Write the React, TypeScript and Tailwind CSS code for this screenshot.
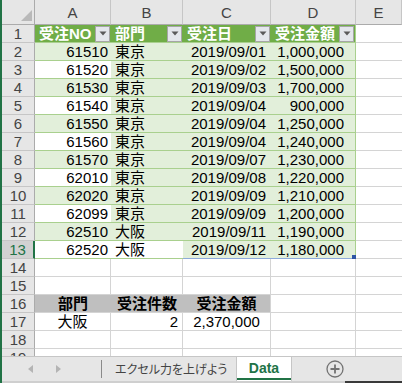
import React from "react";

const data: [string, string, string, string][] = [
  ["61510", "東京", "2019/09/01", "1,000,000"],
  ["61520", "東京", "2019/09/02", "1,500,000"],
  ["61530", "東京", "2019/09/03", "1,700,000"],
  ["61540", "東京", "2019/09/04", "900,000"],
  ["61550", "東京", "2019/09/04", "1,250,000"],
  ["61560", "東京", "2019/09/04", "1,240,000"],
  ["61570", "東京", "2019/09/07", "1,230,000"],
  ["62010", "東京", "2019/09/08", "1,220,000"],
  ["62020", "東京", "2019/09/09", "1,210,000"],
  ["62099", "東京", "2019/09/09", "1,200,000"],
  ["62510", "大阪", "2019/09/11", "1,190,000"],
  ["62520", "大阪", "2019/09/12", "1,180,000"],
];

function RowHead({ n, selected }: { n: number; selected?: boolean }) {
  return (
    <div
      className={
        "h-[18px] flex items-center justify-center border-b border-b-[#c6c6c6] " +
        (selected
          ? "bg-[#d2d2d2] text-[#217346] border-r-2 border-r-[#217346]"
          : "bg-[#e6e6e6] text-[#444444] border-r border-r-[#ababab]")
      }
    >
      {n}
    </div>
  );
}

function FilterBtn() {
  return (
    <div className="w-[15px] h-[16px] mr-[1px] shrink-0 bg-[#e4e7ec] border border-[#a6a6a6] flex items-center justify-center">
      <svg width="8" height="5" viewBox="0 0 8 5">
        <path d="M0.5 0.5 L7.5 0.5 L4 4.5 Z" fill="#5a5a5a" />
      </svg>
    </div>
  );
}

function HeadCell({ text, border }: { text: string; border?: boolean }) {
  return (
    <div
      className={
        "h-[18px] flex items-center justify-between bg-[#70ad47] text-white font-bold pl-1 border-b border-b-[#a9d08e] " +
        (border ? "border-r border-r-[#a9d08e]" : "")
      }
    >
      <span className="whitespace-nowrap">{text}</span>
      <FilterBtn />
    </div>
  );
}

function Blank({ last }: { last?: boolean }) {
  return (
    <div
      className={
        "h-[18px] border-b border-b-[#d4d4d4] " + (last ? "" : "border-r border-r-[#d4d4d4]")
      }
    />
  );
}

export default function App() {
  const green = "bg-[#e2efda]";
  return (
    <div className="w-[402px] h-[383px] flex bg-white overflow-hidden font-['Liberation_Sans','Noto_Sans_CJK_JP',sans-serif] text-[15px] leading-none text-black">
      <div className="w-[2px] shrink-0 bg-[#217346]" />
      <div className="flex-1 flex flex-col min-w-0">
        <div className="h-[356px] overflow-hidden">
          <div className="grid grid-cols-[33px_76px_72px_88px_85px_1fr]">
            {/* column header row */}
            <div className="h-[25px] bg-[#e6e6e6] border-r border-b border-[#ababab] relative">
              <svg className="absolute right-[2px] bottom-[3px]" width="11" height="11" viewBox="0 0 11 11">
                <path d="M11 0 L11 11 L0 11 Z" fill="#b9b9b9" />
              </svg>
            </div>
            {["A", "B", "C", "D", "E"].map((c) => (
              <div
                key={c}
                className="h-[25px] bg-[#e6e6e6] border-r border-r-[#c6c6c6] border-b border-b-[#ababab] flex items-center justify-center text-[#444444] pt-[1px]"
              >
                {c}
              </div>
            ))}

            {/* row 1 */}
            <RowHead n={1} />
            <HeadCell text="受注NO" />
            <HeadCell text="部門" />
            <HeadCell text="受注日" />
            <HeadCell text="受注金額" border />
            <Blank last />

            {/* rows 2-13 */}
            {data.map((d, i) => {
              const r = i + 2;
              const band = r % 2 === 0 ? green : "bg-white";
              const lastRow = r === 13;
              return (
                <React.Fragment key={r}>
                  <RowHead n={r} selected={lastRow} />
                  <div className={"h-[18px] flex items-center justify-end pr-[3px] border-b border-b-[#a9d08e] " + band}>
                    {d[0]}
                  </div>
                  <div
                    className={
                      "h-[18px] flex items-center pl-[4px] border-b border-b-[#a9d08e] " +
                      (lastRow ? "bg-white" : green)
                    }
                  >
                    {d[1]}
                  </div>
                  <div
                    className={
                      "h-[18px] flex items-center justify-end pr-[5px] border-b " +
                      green +
                      (lastRow ? " border-b-[#8eaadb]" : " border-b-[#a9d08e]")
                    }
                  >
                    {d[2]}
                  </div>
                  <div
                    className={
                      "h-[18px] relative flex items-center justify-end pr-[11px] border-b border-r border-r-[#a9d08e] " +
                      green +
                      (lastRow ? " border-b-[#8eaadb]" : " border-b-[#a9d08e]")
                    }
                  >
                    {d[3]}
                    {lastRow && (
                      <div className="absolute right-[-1px] bottom-[-1px] w-[4px] h-[4px] bg-[#2f55a5]" />
                    )}
                  </div>
                  <Blank last />
                </React.Fragment>
              );
            })}

            {/* row 14, 15 */}
            {[14, 15].map((r) => (
              <React.Fragment key={r}>
                <RowHead n={r} />
                <Blank />
                <Blank />
                <Blank />
                <Blank />
                <Blank last />
              </React.Fragment>
            ))}

            {/* row 16 */}
            <RowHead n={16} />
            <div className="h-[18px] flex items-center justify-center bg-[#bfbfbf] font-bold border-b border-b-[#d4d4d4]">部門</div>
            <div className="h-[18px] flex items-center justify-center bg-[#bfbfbf] font-bold border-b border-b-[#d4d4d4]">受注件数</div>
            <div className="h-[18px] flex items-center justify-center bg-[#bfbfbf] font-bold border-b border-b-[#d4d4d4] border-r border-r-[#d4d4d4]">受注金額</div>
            <Blank />
            <Blank last />

            {/* row 17 */}
            <RowHead n={17} />
            <div className="h-[18px] flex items-center justify-center border-b border-r border-[#d4d4d4]">大阪</div>
            <div className="h-[18px] flex items-center justify-end pr-[4px] border-b border-r border-[#d4d4d4]">2</div>
            <div className="h-[18px] flex items-center justify-center border-b border-r border-[#d4d4d4]">2,370,000</div>
            <Blank />
            <Blank last />

            {/* rows 18, 19 */}
            {[18, 19].map((r) => (
              <React.Fragment key={r}>
                <RowHead n={r} />
                <Blank />
                <Blank />
                <Blank />
                <Blank />
                <Blank last />
              </React.Fragment>
            ))}
          </div>
        </div>

        {/* tab bar */}
        <div className="h-[25px] bg-[#e6e6e6] border-t border-t-[#c6c6c6] flex items-stretch">
          <div className="w-[99px] flex items-center">
            <svg className="ml-[26px]" width="5" height="8" viewBox="0 0 5 8">
              <path d="M5 0 L0 4 L5 8 Z" fill="#b4b4b4" />
            </svg>
            <svg className="ml-[23px]" width="5" height="8" viewBox="0 0 5 8">
              <path d="M0 0 L5 4 L0 8 Z" fill="#b4b4b4" />
            </svg>
          </div>
          <div className="flex items-center">
            <div className="w-px h-[18px] bg-[#8a8a8a]" />
          </div>
          <div className="w-[134px] flex items-center pl-[13px] text-[12px] whitespace-nowrap text-[#444444] [font-feature-settings:'palt'] font-['Noto_Sans_CJK_JP',sans-serif]">
            エクセル力を上げよう
          </div>
          <div className="w-[56px] bg-white border-l border-r border-[#c6c6c6] flex flex-col">
            <div className="flex-1 flex items-center justify-center font-bold text-[14px] text-[#217346] pt-[1px]">
              Data
            </div>
            <div className="h-[2px] bg-[#217346] mb-[1px]" />
          </div>
          <div className="flex items-center ml-[34px]">
            <svg width="18" height="18" viewBox="0 0 18 18">
              <circle cx="9" cy="9" r="8" fill="none" stroke="#737373" strokeWidth="1.3" />
              <path d="M9 4.5 V13.5 M4.5 9 H13.5" stroke="#737373" strokeWidth="1.8" />
            </svg>
          </div>
        </div>
        <div className="h-[2px] flex">
          <div className="w-[343px] bg-[#cfcfcf]" />
          <div className="flex-1 bg-[#3a3a3a]" />
        </div>
      </div>
    </div>
  );
}
